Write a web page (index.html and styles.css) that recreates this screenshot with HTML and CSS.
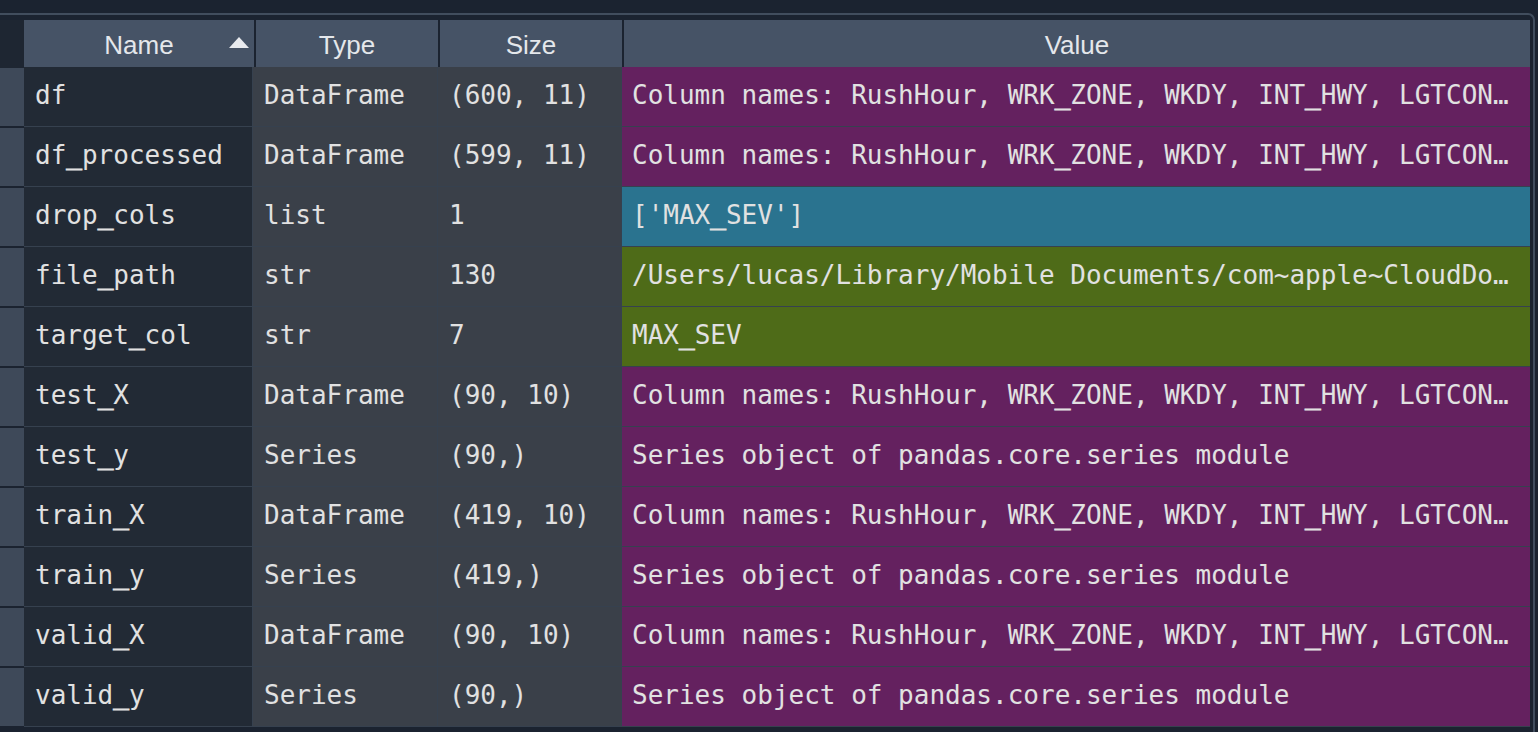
FILE: index.html
```html
<!DOCTYPE html>
<html>
<head>
<meta charset="utf-8">
<link rel="stylesheet" href="styles.css">
</head>
<body>
<div class="panel">
  <div class="gutter">
    <div class="gutter-head"></div>
    <div class="gcell"></div><div class="gcell"></div><div class="gcell"></div><div class="gcell"></div>
    <div class="gcell"></div><div class="gcell"></div><div class="gcell"></div><div class="gcell"></div>
    <div class="gcell"></div><div class="gcell"></div><div class="gcell"></div>
  </div>
  <div class="table">
    <div class="head">
      <div class="hcell sorted">Name<span class="arrow"></span></div>
      <div class="hcell">Type</div>
      <div class="hcell">Size</div>
      <div class="hcell">Value</div>
    </div>
    <div class="body">
      <div class="cell name">df</div><div class="cell meta">DataFrame</div><div class="cell meta">(600, 11)</div><div class="cell val purple">Column names: RushHour, WRK<span class="us">_</span>ZONE, WKDY, INT<span class="us">_</span>HWY, LGTCON…</div>
      <div class="cell name">df<span class="us">_</span>processed</div><div class="cell meta">DataFrame</div><div class="cell meta">(599, 11)</div><div class="cell val purple">Column names: RushHour, WRK<span class="us">_</span>ZONE, WKDY, INT<span class="us">_</span>HWY, LGTCON…</div>
      <div class="cell name">drop<span class="us">_</span>cols</div><div class="cell meta">list</div><div class="cell meta">1</div><div class="cell val blue">['MAX<span class="us">_</span>SEV']</div>
      <div class="cell name">file<span class="us">_</span>path</div><div class="cell meta">str</div><div class="cell meta">130</div><div class="cell val green">/Users/lucas/Library/Mobile Documents/com~apple~CloudDo…</div>
      <div class="cell name">target<span class="us">_</span>col</div><div class="cell meta">str</div><div class="cell meta">7</div><div class="cell val green">MAX<span class="us">_</span>SEV</div>
      <div class="cell name">test<span class="us">_</span>X</div><div class="cell meta">DataFrame</div><div class="cell meta">(90, 10)</div><div class="cell val purple">Column names: RushHour, WRK<span class="us">_</span>ZONE, WKDY, INT<span class="us">_</span>HWY, LGTCON…</div>
      <div class="cell name">test<span class="us">_</span>y</div><div class="cell meta">Series</div><div class="cell meta">(90,)</div><div class="cell val purple">Series object of pandas.core.series module</div>
      <div class="cell name">train<span class="us">_</span>X</div><div class="cell meta">DataFrame</div><div class="cell meta">(419, 10)</div><div class="cell val purple">Column names: RushHour, WRK<span class="us">_</span>ZONE, WKDY, INT<span class="us">_</span>HWY, LGTCON…</div>
      <div class="cell name">train<span class="us">_</span>y</div><div class="cell meta">Series</div><div class="cell meta">(419,)</div><div class="cell val purple">Series object of pandas.core.series module</div>
      <div class="cell name">valid<span class="us">_</span>X</div><div class="cell meta">DataFrame</div><div class="cell meta">(90, 10)</div><div class="cell val purple">Column names: RushHour, WRK<span class="us">_</span>ZONE, WKDY, INT<span class="us">_</span>HWY, LGTCON…</div>
      <div class="cell name">valid<span class="us">_</span>y</div><div class="cell meta">Series</div><div class="cell meta">(90,)</div><div class="cell val purple">Series object of pandas.core.series module</div>
    </div>
  </div>
</div>
</body>
</html>
```
FILE: styles.css
```css
html, body {
  margin: 0;
  padding: 0;
  background: #1b2330;
  width: 1538px;
  height: 732px;
  overflow: hidden;
}

.panel {
  margin-top: 13px;
  width: 1535px;
  box-sizing: border-box;
  border-top: 2px solid #414d5d;
  border-right: 2px solid #414d5d;
  border-top-right-radius: 7px;
  padding-top: 5px;
  padding-right: 3px;
  display: flex;
  align-items: flex-start;
  height: 740px;
}

.gutter {
  width: 24px;
  flex: none;
  display: flex;
  flex-direction: column;
}

.gutter-head {
  height: 48px;
  background: #1e2632;
}

.gcell {
  height: 58px;
  background: #3e4959;
  border-bottom: 2px solid #1b2330;
}

.gcell:first-of-type {
  height: 60px;
}

.table {
  flex: 1;
  display: flex;
  flex-direction: column;
}

.head {
  display: grid;
  grid-template-columns: 230px 182px 182px 1fr;
  column-gap: 2px;
  height: 47px;
  background: #1b2330;
}

.hcell {
  position: relative;
  background: #465366;
  color: #e4e7eb;
  font-family: "Liberation Sans", Arial, sans-serif;
  font-size: 26px;
  display: flex;
  align-items: center;
  justify-content: center;
  padding-top: 3px;
}

.arrow {
  position: absolute;
  right: 5px;
  top: 17px;
  width: 0;
  height: 0;
  border-left: 10.5px solid transparent;
  border-right: 10.5px solid transparent;
  border-bottom: 11px solid #e8eaee;
}

.body {
  display: grid;
  grid-template-columns: 228px 184px 183px 908px;
  grid-auto-rows: 59px;
  gap: 1px;
  padding-bottom: 1px;
  background: #36414f;
}

.cell {
  font-family: "DejaVu Sans Mono", monospace;
  font-size: 26px;
  line-height: 56px;
  height: 59px;
  box-sizing: border-box;
  color: #e1e1e1;
  padding-left: 11px;
  white-space: nowrap;
  overflow: hidden;
}

.us {
  -webkit-text-stroke: 1px #e1e1e1;
}

.name {
  background: #222a35;
}

.meta {
  background: #3a4049;
}

.val {
  padding-left: 10px;
}

.purple {
  background: #64215f;
}

.blue {
  background: #2a738f;
}

.green {
  background: #4e6b18;
}
```
